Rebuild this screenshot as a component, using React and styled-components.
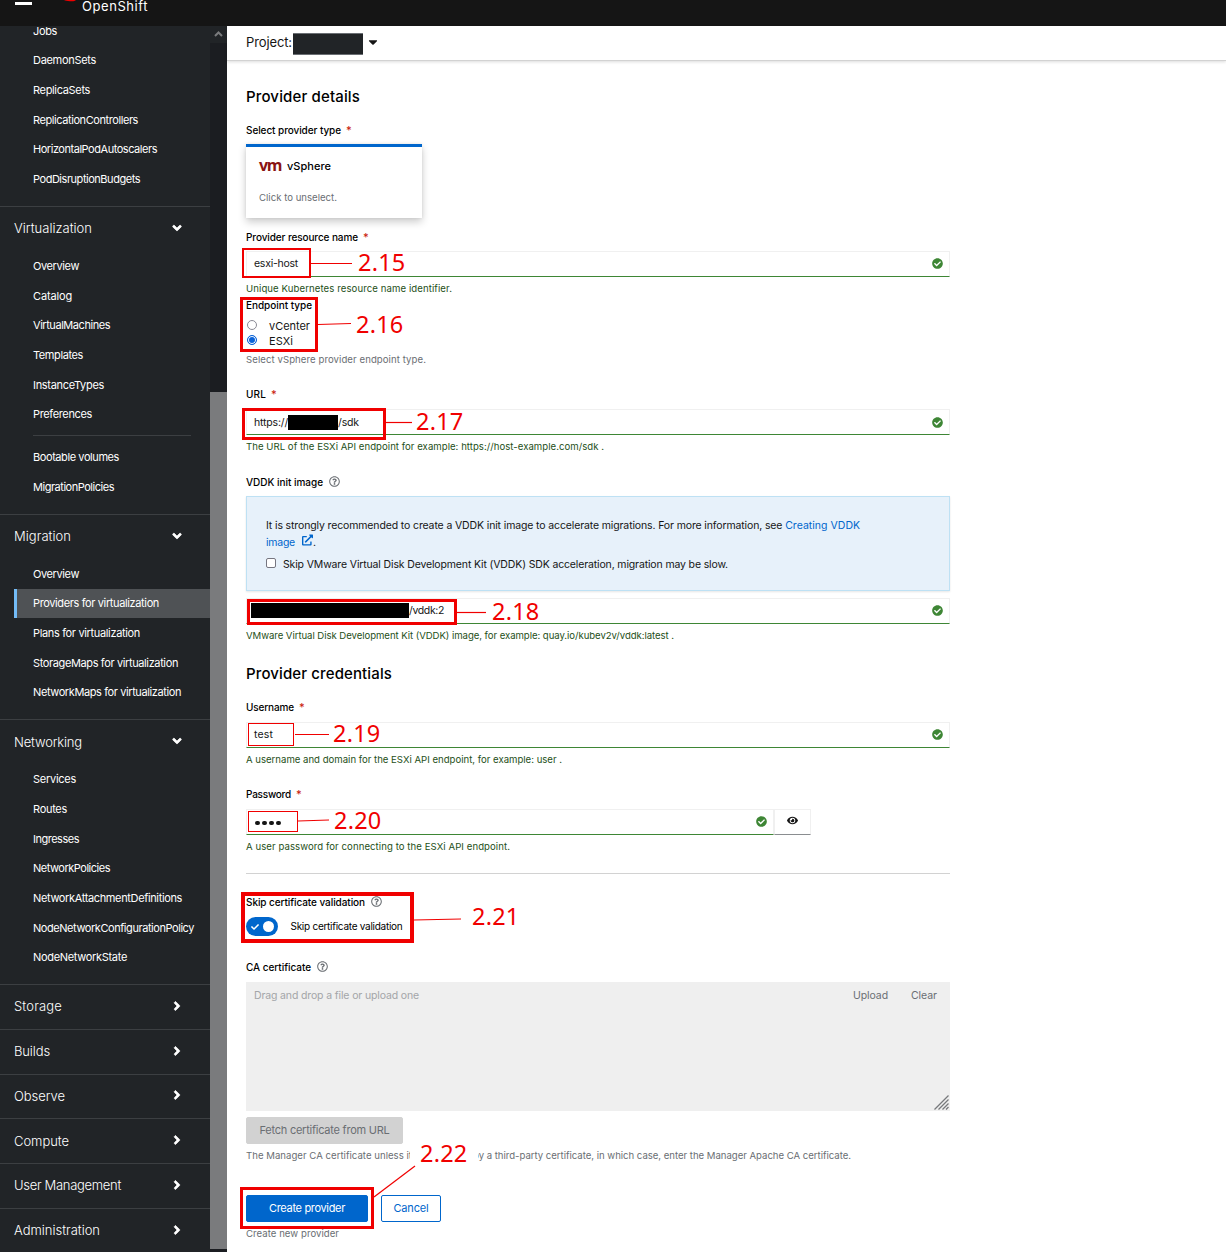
import React, { useLayoutEffect, useRef, useState } from "react";
import styled, { createGlobalStyle, css } from "styled-components";
import {
  FaAngleDown,
  FaAngleRight,
  FaCaretDown,
  FaCheck,
  FaCheckCircle,
  FaExternalLinkAlt,
  FaEye,
  FaRegQuestionCircle,
} from "react-icons/fa";

const GlobalStyle = createGlobalStyle`
  *, *::before, *::after { box-sizing: border-box; }
  html, body { margin: 0; padding: 0; }
  body {
    background: #fff;
    color: #151515;
    font-family: Inter, "Open Sans", sans-serif;
    font-size: 10.5px;
    overflow: hidden;
  }
  button { font-family: inherit; }
`;

/* ---------- text tracked to a given run length ---------- */

const Run = styled.span`
  display: inline-block;
  white-space: pre;
`;

function Text({ w, children }) {
  const ref = useRef(null);
  const [spacing, setSpacing] = useState(0);
  useLayoutEffect(() => {
    const natural = ref.current.getBoundingClientRect().width;
    setSpacing((w - natural) / String(children).length);
  }, [w, children]);
  return (
    <Run ref={ref} style={{ letterSpacing: `${spacing}px` }}>
      {children}
    </Run>
  );
}

/* ---------- page frame ---------- */

const Page = styled.div`
  position: relative;
  display: flex;
  flex-direction: column;
  width: 1226px;
  height: 1252px;
  overflow: hidden;
`;

const Masthead = styled.header`
  display: flex;
  flex: none;
  height: 26px;
  padding-left: 15px;
  background: #151515;
  color: #fff;
  overflow: hidden;
`;

const MenuBar = styled.span`
  width: 17px;
  height: 3px;
  margin-top: 2px;
  background: #fff;
`;

const HatIcon = styled.svg`
  width: 20px;
  height: 4px;
  margin-left: 28px;
`;

const Brand = styled.div`
  height: 18px;
  margin: -3px 0 0 2px;
  font-size: 13px;
  line-height: 18px;
  font-weight: 400;
`;

const Body = styled.div`
  display: flex;
  flex: 1;
  min-height: 0;
`;

/* ---------- sidebar ---------- */

const Sidebar = styled.aside`
  width: 210px;
  flex: none;
  background: #212427;
  color: #fff;
  overflow: hidden;
`;

const Section = styled.section`
  border-top: ${(p) => (p.$first ? "0" : "1px solid #3c3f42")};
  ${(p) => p.$first && css`margin-top: -10.4px;`}
`;

const SectionHead = styled.div`
  display: flex;
  align-items: center;
  justify-content: space-between;
  height: ${(p) => (p.$open ? 44 : 43.75)}px;
  padding: 0 28px ${(p) => (p.$open ? 1 : 1.6)}px 14px;
  font-size: 13px;
  font-weight: 300;
  svg { width: 10px; height: 14px; margin-top: -1px; stroke: #fff; stroke-width: 24px; }
`;

const NavList = styled.div`
  padding: 0.4px 0 12.1px;
`;

const NavItem = styled.div`
  display: flex;
  align-items: center;
  height: 29.65px;
  padding-left: ${(p) => (p.$active ? 16 : 33)}px;
  font-size: 11px;
  ${(p) =>
    p.$active &&
    css`
      margin-left: 14px;
      border-left: 3px solid #73bcf7;
      background: #4f5255;
    `}
`;

const NavDivider = styled.div`
  height: 1px;
  margin: 6px 19px 6px 33px;
  background: #3c3f42;
`;

const Scrollbar = styled.div`
  display: flex;
  flex-direction: column;
  width: 17px;
  flex: none;
  padding-bottom: 3px;
  background: #1b1d21;
`;

const ScrollUp = styled.div`
  display: flex;
  justify-content: center;
  align-items: center;
  height: 17px;
  padding-bottom: 1px;
  background: #212427;
`;

const ScrollThumb = styled.div`
  flex: 1;
  margin-top: 349px;
  background: #7a7b7d;
`;

/* ---------- main ---------- */

const Main = styled.main`
  flex: 1;
  background: #fff;
`;

const ProjectBar = styled.div`
  display: flex;
  align-items: center;
  height: 35px;
  padding: 0 0 2px 19px;
  border-bottom: 1px solid #d2d2d2;
  box-shadow: 0 1px 3px rgba(3, 3, 3, 0.14);
  font-size: 13px;
  svg { width: 12px; height: 14px; margin-left: 4px; }
`;

const ProjectMask = styled.span`
  width: 70px;
  height: 22px;
  margin: 3px 0 0 1px;
  background: #212427;
  border: 1px solid #6a6e73;
  border-width: 1px 0;
`;

const Form = styled.form`
  display: flex;
  flex-direction: column;
  width: 704px;
  margin: 27px 0 0 19px;
`;

const Heading = styled.h2`
  height: 18px;
  margin: ${(p) => p.$top || 0}px 0 0;
  font-size: 15px;
  line-height: 18px;
  font-weight: 500;
  color: #000;
`;

const Label = styled.div`
  display: flex;
  align-items: center;
  height: 14px;
  margin: ${(p) => p.$top}px 0 ${(p) => p.$gap ?? 8}px;
  font-size: 10px;
  line-height: 14px;
  font-weight: 500;
  color: #000;
  svg { width: 11px; height: 11px; margin: -1px 0 0 6px; color: #6a6e73; }
`;

const Star = styled.span`
  margin-left: 5px;
  color: #c9190b;
  font-size: 11px;
`;

const Help = styled.div`
  display: flex;
  height: 14px;
  margin-top: 5px;
  font-size: 9.6px;
  line-height: 14px;
  white-space: nowrap;
  color: ${(p) => (p.$ok ? "#1e4f18" : "#6a6e73")};
`;

const HelpGap = styled.span`
  width: 61px;
`;

const TypeCard = styled.div`
  width: 176px;
  height: 74px;
  padding: 11px 13px 0;
  border-top: 3px solid #06c;
  background: #fff;
  box-shadow: 0 4px 8px rgba(3, 3, 3, 0.2), 0 0 3px rgba(3, 3, 3, 0.08);
`;

const CardTitle = styled.div`
  display: flex;
  align-items: center;
  gap: 6px;
  height: 16px;
  font-size: 11px;
  font-weight: 500;
  color: #000;
`;

const VmLogo = styled.span`
  margin-top: -3px;
  font-family: "Open Sans", sans-serif;
  font-size: 16px;
  line-height: 16px;
  font-weight: 700;
  color: #8a1414;
`;

const CardNote = styled.div`
  margin-top: 17px;
  font-size: 9.6px;
  line-height: 14px;
  color: #6a6e73;
`;

const InputRow = styled.div`
  display: flex;
  margin-top: ${(p) => p.$top || 0}px;
`;

const InputBox = styled.div`
  display: flex;
  align-items: center;
  justify-content: space-between;
  width: ${(p) => p.$width || 704}px;
  height: 26px;
  padding: ${(p) => (p.$low ? "1px 6px 0 7px" : "0 6px 1px 7px")};
  border: 1px solid #f0f0f0;
  border-bottom-color: #3e8635;
  font-size: 10.5px;
  svg { width: 11px; height: 11px; color: #3e8635; }
`;

const Value = styled.span`
  display: flex;
  align-items: center;
`;

const Redaction = styled.span`
  width: ${(p) => p.$width}px;
  height: 15px;
  margin-left: ${(p) => p.$left || 0}px;
  background: #000;
`;

const Dots = styled.span`
  display: flex;
  gap: 2px;
  padding: 2px 0 0 1px;
`;

const Dot = styled.i`
  width: 5px;
  height: 4px;
  border-radius: 2px;
  background: #151515;
`;

const RevealButton = styled.div`
  display: flex;
  align-items: center;
  justify-content: center;
  width: 37px;
  height: 26px;
  padding-bottom: 3px;
  border: 1px solid #f0f0f0;
  border-bottom-color: #8a8d90;
  svg { width: 11px; height: 11px; }
`;

const RadioRow = styled.div`
  display: flex;
  align-items: center;
  height: 15px;
  font-size: 11px;
`;

const Radio = styled.span`
  width: 10px;
  height: 10px;
  margin: 0 12px 1px 1px;
  border: 1px solid ${(p) => (p.$on ? "#0b63d8" : "#8a8a94")};
  border-radius: 50%;
  background: ${(p) => (p.$on ? "#0b63d8" : "#fff")};
  box-shadow: inset 0 0 0 1px #fff;
`;

const Notice = styled.div`
  height: 95px;
  padding: 20px 19px 0;
  border: 1px solid #bee1f4;
  background: #e7f1fa;
  box-shadow: 0 1px 2px rgba(3, 3, 3, 0.1);
  font-size: 10.5px;
  line-height: 17px;
`;

const NoticeLine = styled.div`
  display: flex;
  height: 17px;
  white-space: pre;
`;

const Link = styled.span`
  display: flex;
  color: #06c;
  svg { width: 11px; height: 12px; margin: 0 0 0 7px; }
`;

const CheckRow = styled.div`
  display: flex;
  align-items: center;
  gap: 7px;
  height: 17px;
  margin-top: 5px;
`;

const Checkbox = styled.span`
  width: 10px;
  height: 10px;
  margin-bottom: 3px;
  border: 1px solid #767680;
  border-radius: 2px;
  background: #fff;
`;

const Rule = styled.div`
  height: 1px;
  margin-top: 19px;
  background: #d2d2d2;
`;

const SwitchRow = styled.div`
  display: flex;
  align-items: center;
  height: 19px;
  gap: 12.5px;
  font-size: 10px;
  line-height: 14px;
  color: #000;
  > span:last-child { margin-top: -2px; }
`;

const Toggle = styled.span`
  display: flex;
  align-items: center;
  justify-content: space-between;
  width: 32px;
  height: 19px;
  padding: 0 4px 0 5px;
  border-radius: 10px;
  background: #06c;
  color: #fff;
  svg { width: 8px; height: 8px; }
  i { width: 11px; height: 11px; border-radius: 50%; background: #fff; }
`;

const Upload = styled.div`
  display: flex;
  flex-direction: column;
  justify-content: space-between;
  height: 129px;
  padding: 7px 1px 1px 8px;
  background: #efefef;
  color: #6a6e73;
  font-size: 10.5px;
  line-height: 14px;
`;

const UploadTop = styled.div`
  display: flex;
  padding-right: 12px;
`;

const Placeholder = styled.span`
  flex: 1;
  color: #a3a5a8;
`;

const UploadAction = styled.span`
  margin-left: 23px;
`;

const Grip = styled.svg`
  align-self: flex-end;
  width: 15px;
  height: 15px;
`;

const ButtonRow = styled.div`
  display: flex;
  gap: 13px;
  margin-top: ${(p) => p.$top}px;
`;

const Button = styled.button`
  display: flex;
  align-items: center;
  justify-content: center;
  width: ${(p) => p.$width}px;
  height: 27px;
  padding: 0 0 1px;
  border: 1px solid ${(p) => (p.$kind === "disabled" ? "#d2d2d2" : "#06c")};
  border-radius: 2px;
  background: ${(p) => ({ disabled: "#d2d2d2", primary: "#06c", secondary: "#fff" })[p.$kind]};
  color: ${(p) => ({ disabled: "#6a6e73", primary: "#fff", secondary: "#06c" })[p.$kind]};
  font-size: 11px;
`;

/* ---------- step callouts drawn over the form ---------- */

const Callouts = styled.div`
  position: absolute;
  inset: 0;
  pointer-events: none;
`;

const Frame = styled.div`
  position: absolute;
  left: ${(p) => p.$x}px;
  top: ${(p) => p.$y}px;
  width: ${(p) => p.$w}px;
  height: ${(p) => p.$h}px;
  border: ${(p) => p.$line}px solid #f00000;
`;

const Step = styled.div`
  position: absolute;
  left: ${(p) => p.$x}px;
  top: ${(p) => p.$y - 15}px;
  width: ${(p) => (p.$masked ? 68 : 48)}px;
  height: 26px;
  padding-left: ${(p) => (p.$masked ? 10 : 0)}px;
  background: ${(p) => (p.$masked ? "#fff" : "transparent")};
  color: #f00000;
  font-family: "Noto Sans", "Open Sans", sans-serif;
  font-size: 23.5px;
  line-height: 28px;
`;

const Leaders = styled.svg`
  position: absolute;
  inset: 0;
  width: 1226px;
  height: 1252px;
`;

const nav = [
  {
    items: [
      ["Jobs", 24],
      ["DaemonSets", 63],
      ["ReplicaSets", 57],
      ["ReplicationControllers", 105],
      ["HorizontalPodAutoscalers", 124],
      ["PodDisruptionBudgets", 107],
    ],
  },
  {
    title: ["Virtualization", 78],
    items: [
      ["Overview", 46],
      ["Catalog", 39],
      ["VirtualMachines", 77],
      ["Templates", 50],
      ["InstanceTypes", 71],
      ["Preferences", 59],
      null,
      ["Bootable volumes", 86],
      ["MigrationPolicies", 81],
    ],
  },
  {
    title: ["Migration", 57],
    items: [
      ["Overview", 46],
      ["Providers for virtualization", 126, true],
      ["Plans for virtualization", 107],
      ["StorageMaps for virtualization", 145],
      ["NetworkMaps for virtualization", 148],
    ],
  },
  {
    title: ["Networking", 68],
    items: [
      ["Services", 43],
      ["Routes", 34],
      ["Ingresses", 46],
      ["NetworkPolicies", 77],
      ["NetworkAttachmentDefinitions", 149],
      ["NodeNetworkConfigurationPolicy", 161],
      ["NodeNetworkState", 94],
    ],
  },
  { title: ["Storage", 48] },
  { title: ["Builds", 36] },
  { title: ["Observe", 51] },
  { title: ["Compute", 55] },
  { title: ["User Management", 107] },
  { title: ["Administration", 86] },
];

const frames = [
  [242, 248, 69, 30, 2],
  [240, 297, 78, 55, 3],
  [242, 408, 144, 32, 3],
  [247, 599, 210, 26, 3],
  [248, 723, 46, 23, 1.5],
  [248, 811, 50, 21, 1.5],
  [241, 892, 173, 51, 4],
  [240, 1187, 134, 42, 3],
];

const steps = [
  ["2.15", 358, 263],
  ["2.16", 356, 325],
  ["2.17", 416, 422],
  ["2.18", 492, 612],
  ["2.19", 333, 734],
  ["2.20", 334, 821],
  ["2.21", 472, 917],
  ["2.22", 410, 1154, true],
];

const leaders = [
  [311, 263.5, 352, 263.5],
  [318, 324.5, 351, 323.5],
  [386, 422.5, 412, 422.5],
  [457, 612.5, 486, 612.5],
  [295, 734.5, 329, 734.5],
  [298, 821, 329, 820],
  [414, 920, 461, 919],
  [374, 1197, 415, 1166],
];

function Required() {
  return <Star>*</Star>;
}

function Field({ width, low, children }) {
  return (
    <InputBox $width={width} $low={low}>
      <Value>{children}</Value>
      <FaCheckCircle />
    </InputBox>
  );
}

function Navigation() {
  return (
    <Sidebar>
      {nav.map((section, i) => (
        <Section key={i} $first={i === 0}>
          {section.title && (
            <SectionHead $open={!!section.items}>
              <Text w={section.title[1]}>{section.title[0]}</Text>
              {section.items ? <FaAngleDown /> : <FaAngleRight />}
            </SectionHead>
          )}
          {section.items && (
            <NavList>
              {section.items.map((item, n) =>
                item ? (
                  <NavItem key={n} $active={item[2]}>
                    <Text w={item[1]}>{item[0]}</Text>
                  </NavItem>
                ) : (
                  <NavDivider key={n} />
                )
              )}
            </NavList>
          )}
        </Section>
      ))}
    </Sidebar>
  );
}

export default function App() {
  return (
    <Page>
      <GlobalStyle />
      <Masthead>
        <MenuBar />
        <HatIcon viewBox="0 0 20 4">
          <path d="M4 0h12c-1 1-3 1.6-6 1.2C7 1 5.500 .8 4 0z" fill="#e00" />
        </HatIcon>
        <Brand>
          <Text w={66}>OpenShift</Text>
        </Brand>
      </Masthead>
      <Body>
        <Navigation />
        <Scrollbar>
          <ScrollUp>
            <svg width="9" height="6" viewBox="0 0 9 6">
              <path d="M1 5l3.500-3.500L8 5" fill="none" stroke="#7a7b7d" strokeWidth="2" />
            </svg>
          </ScrollUp>
          <ScrollThumb />
        </Scrollbar>
        <Main>
          <ProjectBar>
            <Text w={46}>Project:</Text>
            <ProjectMask />
            <FaCaretDown />
          </ProjectBar>
          <Form>
            <Heading>
              <Text w={114}>Provider details</Text>
            </Heading>
            <Label $top={17} $gap={7}>
              <Text w={95}>Select provider type</Text>
              <Required />
            </Label>
            <TypeCard>
              <CardTitle>
                <VmLogo>
                  <Text w={22}>vm</Text>
                </VmLogo>
                <Text w={44}>vSphere</Text>
              </CardTitle>
              <CardNote>
                <Text w={78}>Click to unselect.</Text>
              </CardNote>
            </TypeCard>

            <Label $top={12} $gap={7}>
              <Text w={112}>Provider resource name</Text>
              <Required />
            </Label>
            <Field>
              <Text w={44}>esxi-host</Text>
            </Field>
            <Help $ok>
              <Text w={206}>Unique Kubernetes resource name identifier.</Text>
            </Help>

            <Label $top={2} $gap={6}>
              <Text w={66}>Endpoint type</Text>
            </Label>
            <RadioRow>
              <Radio />
              <Text w={41}>vCenter</Text>
            </RadioRow>
            <RadioRow>
              <Radio $on />
              <Text w={24}>ESXi</Text>
            </RadioRow>
            <Help>
              <Text w={180}>Select vSphere provider endpoint type.</Text>
            </Help>

            <Label $top={20}>
              <Text w={20}>URL</Text>
              <Required />
            </Label>
            <Field low>
              <Text w={34}>https://</Text>
              <Redaction $width={50} />
              <Text w={21}>/sdk</Text>
            </Field>
            <Help $ok>
              <Text w={358}>The URL of the ESXi API endpoint for example: https://host-example.com/sdk .</Text>
            </Help>

            <Label $top={21} $gap={7}>
              <Text w={77}>VDDK init image</Text>
              <FaRegQuestionCircle />
            </Label>
            <Notice>
              <NoticeLine>
                <Text w={519}>
                  It is strongly recommended to create a VDDK init image to accelerate migrations. For more information, see{" "}
                </Text>
                <Link>
                  <Text w={75}>Creating VDDK</Text>
                </Link>
              </NoticeLine>
              <NoticeLine>
                <Link>
                  <Text w={29}>image</Text>
                  <FaExternalLinkAlt />
                </Link>
                .
              </NoticeLine>
              <CheckRow>
                <Checkbox />
                <Text w={445}>
                  Skip VMware Virtual Disk Development Kit (VDDK) SDK acceleration, migration may be slow.
                </Text>
              </CheckRow>
            </Notice>
            <InputRow $top={7}>
              <Field>
                <Redaction $width={158} $left={-3} />
                <Text w={35}>/vddk:2</Text>
              </Field>
            </InputRow>
            <Help $ok>
              <Text w={428}>
                VMware Virtual Disk Development Kit (VDDK) image, for example: quay.io/kubev2v/vddk:latest .
              </Text>
            </Help>

            <Heading $top={22}>
              <Text w={146}>Provider credentials</Text>
            </Heading>
            <Label $top={17}>
              <Text w={48}>Username</Text>
              <Required />
            </Label>
            <Field>
              <Text w={19}>test</Text>
            </Field>
            <Help $ok>
              <Text w={316}>A username and domain for the ESXi API endpoint, for example: user .</Text>
            </Help>

            <Label $top={20}>
              <Text w={45}>Password</Text>
              <Required />
            </Label>
            <InputRow>
              <Field width={528}>
                <Dots>
                  <Dot />
                  <Dot />
                  <Dot />
                  <Dot />
                </Dots>
              </Field>
              <RevealButton>
                <FaEye />
              </RevealButton>
            </InputRow>
            <Help $ok>
              <Text w={264}>A user password for connecting to the ESXi API endpoint.</Text>
            </Help>

            <Rule />
            <Label $top={21}>
              <Text w={119}>Skip certificate validation</Text>
              <FaRegQuestionCircle />
            </Label>
            <SwitchRow>
              <Toggle>
                <FaCheck />
                <i />
              </Toggle>
              <Text w={112}>Skip certificate validation</Text>
            </SwitchRow>

            <Label $top={24}>
              <Text w={65}>CA certificate</Text>
              <FaRegQuestionCircle />
            </Label>
            <Upload>
              <UploadTop>
                <Placeholder>
                  <Text w={165}>Drag and drop a file or upload one</Text>
                </Placeholder>
                <UploadAction>
                  <Text w={35}>Upload</Text>
                </UploadAction>
                <UploadAction>
                  <Text w={26}>Clear</Text>
                </UploadAction>
              </UploadTop>
              <Grip viewBox="0 0 15 15">
                <path d="M.5 14.500l14-14M4.500 14.500l10-10M8.500 14.500l6-6M12 14.500l2.500-2.500" stroke="#77797c" strokeWidth="1.300" />
              </Grip>
            </Upload>
            <ButtonRow $top={6}>
              <Button type="button" $kind="disabled" $width={157}>
                <Text w={130}>Fetch certificate from URL</Text>
              </Button>
            </ButtonRow>
            <Help>
              <Text w={166}>The Manager CA certificate unless it</Text>
              <HelpGap />
              <Text w={378}>
                by a third-party certificate, in which case, enter the Manager Apache CA certificate.
              </Text>
            </Help>

            <ButtonRow $top={32}>
              <Button type="button" $kind="primary" $width={122}>
                <Text w={76}>Create provider</Text>
              </Button>
              <Button type="button" $kind="secondary" $width={60}>
                <Text w={35}>Cancel</Text>
              </Button>
            </ButtonRow>
            <Help>
              <Text w={93}>Create new provider</Text>
            </Help>
          </Form>
        </Main>
      </Body>
      <Callouts>
        {frames.map(([x, y, w, h, line]) => (
          <Frame key={y} $x={x} $y={y} $w={w} $h={h} $line={line} />
        ))}
        {steps.map(([text, x, y, masked]) => (
          <Step key={text} $x={x} $y={y} $masked={masked}>
            <Text w={47.5}>{text}</Text>
          </Step>
        ))}
        <Leaders viewBox="0 0 1226 1252">
          {leaders.map(([x1, y1, x2, y2]) => (
            <line key={y1} x1={x1} y1={y1} x2={x2} y2={y2} stroke="#f00000" strokeWidth="1.200" />
          ))}
        </Leaders>
      </Callouts>
    </Page>
  );
}
